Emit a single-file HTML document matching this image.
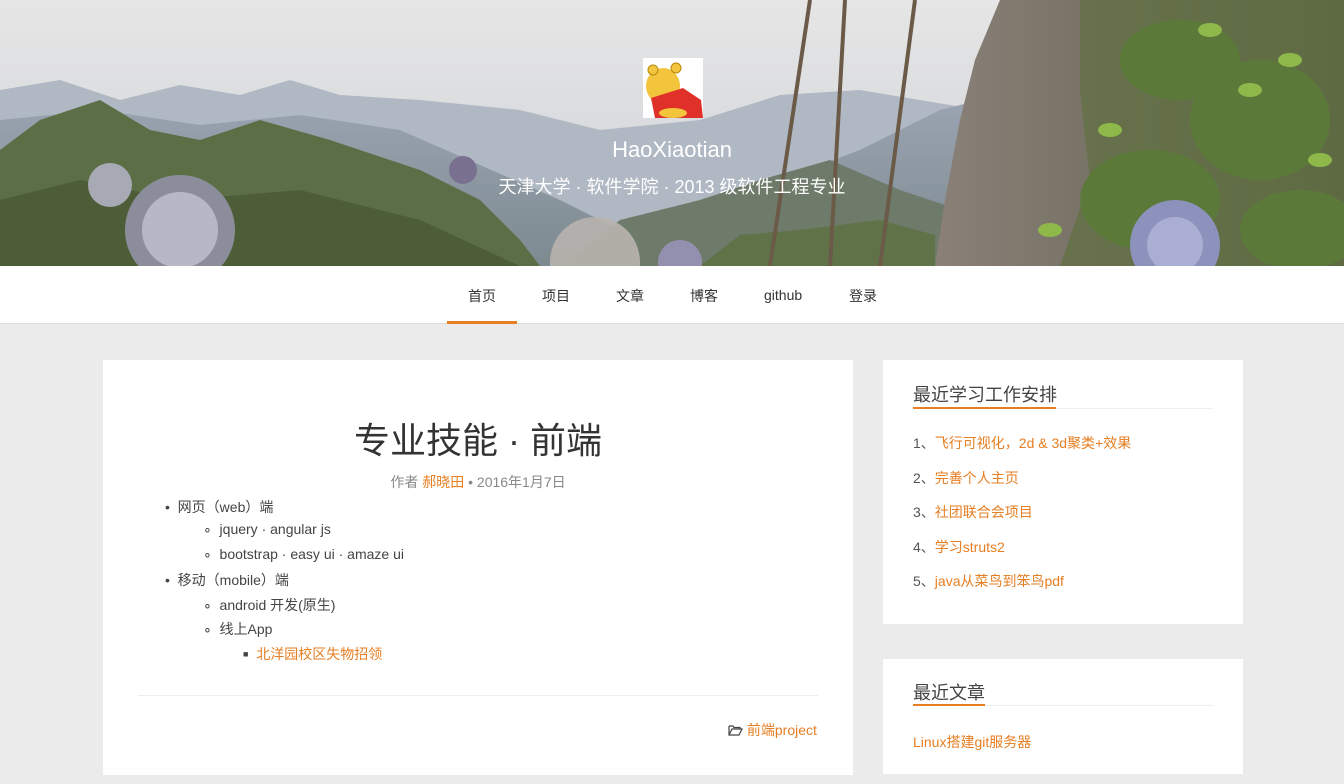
<!DOCTYPE html>
<html><head><meta charset="utf-8">
<style>
*{margin:0;padding:0;box-sizing:border-box}
body{width:1344px;height:784px;overflow:hidden;background:#ebebeb;font-family:"Liberation Sans","Noto Sans CJK SC",sans-serif;color:#333}
.hero{position:absolute;left:0;top:0;width:1344px;height:266px;overflow:hidden}
.hero svg{position:absolute;left:0;top:0}
.avatar{position:absolute;left:643px;top:58px;width:60px;height:60px;background:#fff}
.name{position:absolute;left:0;width:1344px;top:137px;text-align:center;color:#fff;font-size:22px}
.sub{position:absolute;left:0;width:1344px;top:173px;text-align:center;color:#fff;font-size:18px}
.nav{position:absolute;top:266px;left:0;width:1344px;height:58px;background:#fff;border-bottom:1px solid #ddd}
.nav a{position:absolute;top:20px;font-size:14px;color:#333;text-decoration:none}
.nav .act{position:absolute;left:447px;top:55px;width:70px;height:3px;background:#e67e22}
.card{position:absolute;background:#fff}
.title{position:absolute;left:0;width:750px;top:52px;text-align:center;font-size:36px;color:#333}
.meta{position:absolute;left:0;width:750px;top:112px;text-align:center;font-size:14px;color:#888}
.o{color:#e67e22}
.li{position:absolute;font-size:14px;color:#444;white-space:nowrap}
.side h3{position:absolute;left:30px;font-size:18px;font-weight:normal;color:#444}
.side .ln{position:absolute;left:30px;width:300px;height:1px;background:#eee}
.side .ul{position:absolute;left:30px;height:2px;background:#e67e22}
.side .it{position:absolute;left:30px;font-size:14px;color:#555}
</style></head><body>
<div class="hero">
<svg width="1344" height="266" viewBox="0 0 1344 266">
<defs>
<linearGradient id="sky" x1="0" y1="0" x2="0" y2="1"><stop offset="0" stop-color="#e6e6e6"/><stop offset="1" stop-color="#ccd0d6"/></linearGradient>
<linearGradient id="m1" x1="0" y1="0" x2="0" y2="1"><stop offset="0" stop-color="#9aa4b2"/><stop offset="1" stop-color="#7d8a90"/></linearGradient>
<linearGradient id="cl" x1="0" y1="0" x2="1" y2="0"><stop offset="0" stop-color="#8a8078"/><stop offset="1" stop-color="#5a5e48"/></linearGradient>
</defs>
<rect width="1344" height="266" fill="url(#sky)"/>
<path d="M0 90 L60 80 L120 100 L180 85 L240 95 L290 80 L340 95 L420 100 L520 110 L600 130 L700 120 L780 95 L860 90 L980 110 L980 266 L0 266Z" fill="#b0b8c3"/>
<path d="M0 120 L100 110 L200 125 L300 115 L400 130 L480 165 L560 200 L620 230 L700 215 L780 180 L860 150 L940 110 L980 100 L980 266 L0 266Z" fill="url(#m1)"/>
<path d="M560 266 L620 220 L700 200 L760 180 L830 160 L900 190 L960 210 L960 266Z" fill="#6e7a6a"/>
<path d="M1000 0 L1110 0 L1344 0 L1344 266 L935 266 L945 200 L960 120 L975 60 Z" fill="url(#cl)"/>
<path d="M1080 0 L1344 0 L1344 266 L1060 266 L1090 180 L1080 90Z" fill="#5f7040" opacity=".7"/>
<g fill="#5b7a3a">
<ellipse cx="1180" cy="60" rx="60" ry="40"/><ellipse cx="1260" cy="120" rx="70" ry="60"/><ellipse cx="1150" cy="200" rx="70" ry="50"/><ellipse cx="1300" cy="230" rx="60" ry="40"/>
</g>
<g fill="#8fb84a"><ellipse cx="1210" cy="30" rx="12" ry="7"/><ellipse cx="1250" cy="90" rx="12" ry="7"/><ellipse cx="1110" cy="130" rx="12" ry="7"/><ellipse cx="1290" cy="60" rx="12" ry="7"/><ellipse cx="1320" cy="160" rx="12" ry="7"/><ellipse cx="1160" cy="240" rx="12" ry="7"/><ellipse cx="1050" cy="230" rx="12" ry="7"/></g>
<path d="M0 150 L40 120 L100 100 L150 130 L200 140 L260 120 L330 140 L420 170 L480 200 L520 240 L540 266 L0 266Z" fill="#5c6e45"/>
<path d="M0 200 L80 180 L180 200 L300 190 L420 220 L520 266 L0 266Z" fill="#4c5d38"/>
<path d="M700 266 L740 235 L800 230 L880 220 L935 235 L935 266Z" fill="#607348"/>
<circle cx="180" cy="230" r="55" fill="#8b8e9a"/><circle cx="180" cy="230" r="38" fill="#b6b8c6"/>
<circle cx="110" cy="185" r="22" fill="#a7aab4"/>
<circle cx="595" cy="262" r="45" fill="#b8b2ae" opacity=".9"/>
<circle cx="680" cy="262" r="22" fill="#9c96c0" opacity=".8"/>
<circle cx="1175" cy="245" r="45" fill="#8d92bd"/><circle cx="1175" cy="245" r="28" fill="#a9aed2"/>
<circle cx="463" cy="170" r="14" fill="#7a7090"/>
<g stroke="#6b5a48" stroke-width="4"><line x1="810" y1="0" x2="770" y2="266"/><line x1="845" y1="0" x2="830" y2="266"/><line x1="915" y1="0" x2="880" y2="266"/></g>
</svg>
<div class="avatar"><svg width="60" height="60"><ellipse cx="20" cy="28" rx="17" ry="18" fill="#f2c53d"/><circle cx="10" cy="12" r="5" fill="#f2c53d" stroke="#b8860b"/><circle cx="33" cy="10" r="5" fill="#f2c53d" stroke="#b8860b"/><path d="M8 40 L40 30 L58 42 L60 60 L12 60Z" fill="#e0302a"/><ellipse cx="30" cy="55" rx="14" ry="5" fill="#f2c53d"/></svg></div>
<div class="name">HaoXiaotian</div>
<div class="sub">天津大学 · 软件学院 · 2013 级软件工程专业</div>
</div>
<div class="nav">
<a style="left:468px">首页</a><a style="left:542px">项目</a><a style="left:616px">文章</a><a style="left:690px">博客</a><a style="left:764px;top:21px">github</a><a style="left:849px">登录</a>
<div class="act"></div>
</div>
<div class="card" style="left:103px;top:360px;width:750px;height:415px">
<div class="title">专业技能 · 前端</div>
<div class="meta">作者 <span class="o">郝晓田</span> • 2016年1月7日</div>
<div class="li" style="left:62px;top:137px">•&nbsp; 网页（web）端</div>
<div class="li" style="left:100px;top:161px">∘&nbsp;&nbsp;jquery · angular js</div>
<div class="li" style="left:100px;top:186px">∘&nbsp;&nbsp;bootstrap · easy ui · amaze ui</div>
<div class="li" style="left:62px;top:210px">•&nbsp; 移动（mobile）端</div>
<div class="li" style="left:100px;top:235px">∘&nbsp;&nbsp;android 开发(原生)</div>
<div class="li" style="left:100px;top:259px">∘&nbsp;&nbsp;线上App</div>
<div class="li" style="left:140px;top:284px"><span style="font-size:9px;vertical-align:2px">■</span>&nbsp; <span class="o">北洋园校区失物招领</span></div>
<div style="position:absolute;left:35px;top:335px;width:680px;height:1px;background:#eee"></div>
<div class="li" style="left:625px;top:360px"><svg width="15" height="12" style="vertical-align:-1px"><path d="M1 2 H5 L6 3.5 H12 V5 M1 2 V11 H11 L14 5 H4 L1 11" fill="none" stroke="#444" stroke-width="1.2"/></svg> <span class="o">前端project</span></div>
</div>
<div class="card side" style="left:883px;top:360px;width:360px;height:264px">
<h3 style="top:21px">最近学习工作安排</h3>
<div class="ln" style="top:48px"></div><div class="ul" style="top:47px;width:143px"></div>
<div class="it" style="top:73px">1、<span class="o">飞行可视化，2d &amp; 3d聚类+效果</span></div>
<div class="it" style="top:108px">2、<span class="o">完善个人主页</span></div>
<div class="it" style="top:142px">3、<span class="o">社团联合会项目</span></div>
<div class="it" style="top:177px">4、<span class="o">学习struts2</span></div>
<div class="it" style="top:211px">5、<span class="o">java从菜鸟到笨鸟pdf</span></div>
</div>
<div class="card side" style="left:883px;top:659px;width:360px;height:115px">
<h3 style="top:20px">最近文章</h3>
<div class="ln" style="top:46px"></div><div class="ul" style="top:45px;width:72px"></div>
<div class="it" style="top:73px"><span class="o">Linux搭建git服务器</span></div>
</div>
</body></html>
